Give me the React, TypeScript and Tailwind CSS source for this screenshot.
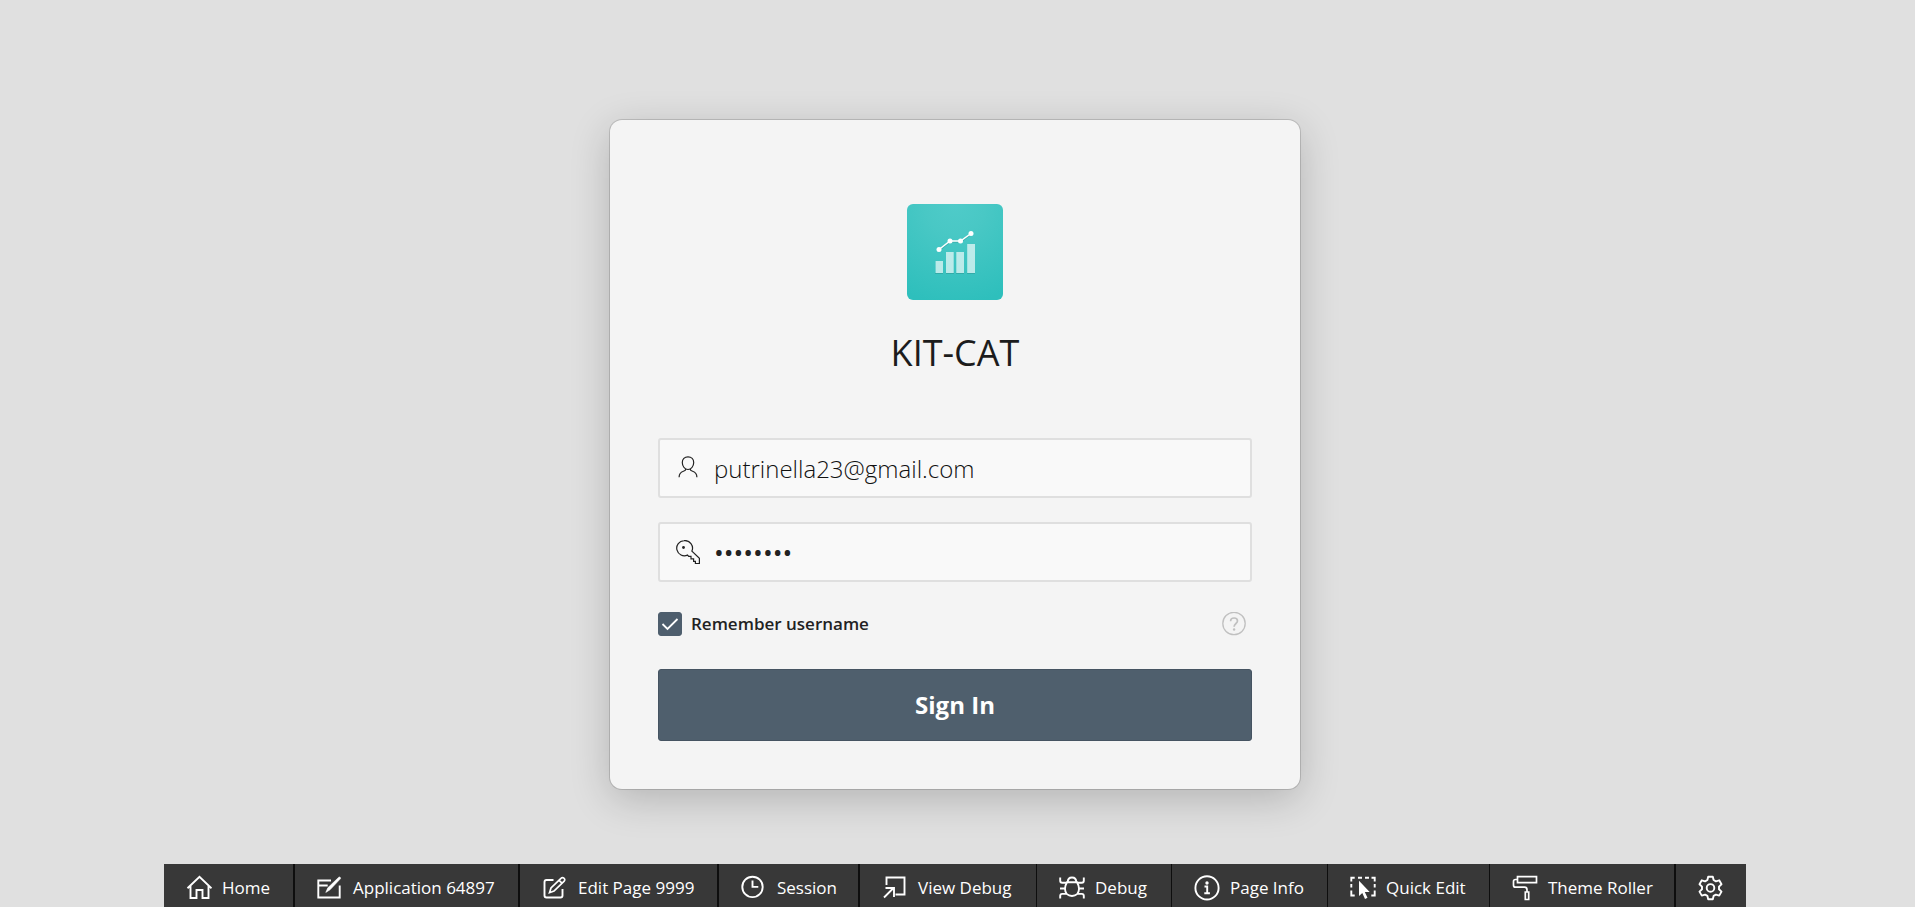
import type { ReactNode } from 'react';

type IconProps = { children: ReactNode };

function ToolIcon({ children }: IconProps) {
  return (
    <svg
      viewBox="0 0 26 26"
      className="h-[26px] w-[26px] shrink-0"
      fill="none"
      stroke="currentColor"
      strokeWidth="1.9"
      aria-hidden="true"
    >
      {children}
    </svg>
  );
}

const items = [
  {
    label: 'Home',
    width: 'min-w-[131px] border-r-2',
    icon: (
      <path d="M1.500 13.300 13.500 1.800l12 11.500M4.500 10.800V23h6v-8h6v8h6V10.800" />
    ),
  },
  {
    label: 'Application 64897',
    width: 'min-w-[225px] border-r-2',
    icon: (
      <>
        <path d="M14 5.500H1.300v17h21.400V10.500M1.300 10.500h9.400" />
        <path d="M21.800 2.200c.9-.7 2.300.5 1.600 1.600L13 14.800l-4.200 2.600 2-4.600Z" fill="currentColor" strokeWidth="0.600" />
      </>
    ),
  },
  {
    label: 'Edit Page 9999',
    width: 'min-w-[199px] border-r-2',
    icon: (
      <>
        <path d="M11.500 5H4.500a2 2 0 0 0-2 2v13.500a2 2 0 0 0 2 2h14a2 2 0 0 0 2-2V14" />
        <path d="m7.500 17.700 1.500-4.800L19.200 3.100a1.800 1.800 0 0 1 2.600 0l.4.400a1.800 1.800 0 0 1 0 2.600L12 16.100ZM17.100 5.300l2.900 2.900" strokeWidth="1.700" />
      </>
    ),
  },
  {
    label: 'Session',
    width: 'min-w-[141px] border-r-2',
    icon: (
      <>
        <circle cx="11.500" cy="11.900" r="10.200" />
        <path d="M11.500 5.400v6.500h5.800" />
      </>
    ),
  },
  {
    label: 'View Debug',
    width: 'min-w-[177px] border-r',
    icon: (
      <>
        <path d="M4.500 10V2.500h18v17H13.500" />
        <path d="M2 22.500 11.500 13M3.500 13h8.500v9" />
      </>
    ),
  },
  {
    label: 'Debug',
    width: 'min-w-[135px] border-r',
    icon: (
      <>
        <path d="M8 7.300h10c1.200 2 2 4.100 2 6.500 0 4.700-3 7.200-7 7.200s-7-2.500-7-7.200c0-2.400.8-4.500 2-6.500Z" />
        <path d="M8.700 7.300c0-2.800 1.700-4.800 4.300-4.800s4.300 2 4.300 4.800M1.200 2.500v3.300c0 1.400.8 2 2 2H8M24.800 2.500v3.300c0 1.400-.8 2-2 2H18M1 13.500h5M20 13.500h5M1.200 23.500v-2.600c0-1.400.8-2 2-2h4.200M24.800 23.500v-2.600c0-1.400-.8-2-2-2h-4.200" />
      </>
    ),
  },
  {
    label: 'Page Info',
    width: 'min-w-[156px] border-r',
    icon: (
      <>
        <circle cx="13" cy="12.900" r="11.600" />
        <circle cx="13" cy="8" r="1.700" fill="currentColor" stroke="none" />
        <path d="M10.500 11.500h2.700v6.800M10.300 18.300h5.600" />
      </>
    ),
  },
  {
    label: 'Quick Edit',
    width: 'min-w-[162px] border-r',
    icon: (
      <>
        <path d="M1.300 6.500V2.800h3.400M8 2.800h4M15 2.800h4M21.500 2.800h3.200v3.700M1.300 9v3.500M1.300 15.500v5h3.400M24.700 9v3.500M24.700 15.500v5h-3.400" />
        <path d="M9 5.700v15.200l3.300-3 2.700 6 2.500-1.200-2.700-5.600 4.900-.1Z" fill="currentColor" stroke="none" />
      </>
    ),
  },
  {
    label: 'Theme Roller',
    width: 'min-w-[186px] border-r-2',
    icon: (
      <path
        d="M5.500 1.700h19v6h-19zM5.500 4.500H3.500a2 2 0 0 0-2 2v3.700a2 2 0 0 0 2 2h9a2.500 2.500 0 0 1 2.500 2.500V17M13.300 17h3.400v7.500h-3.400z"
        strokeWidth="1.700"
      />
    ),
  },
];

export default function App() {
  return (
    <div className="flex min-h-screen flex-col items-center bg-[#e0e0e0] pr-[5px] font-['Open_Sans','Noto_Sans',sans-serif] text-[#222]">
      <main className="flex w-full flex-1 flex-col items-center justify-center px-4 pt-[45px]">
        <form
          className="flex w-full max-w-[722px] flex-col px-4"
          onSubmit={(e) => e.preventDefault()}
        >
          <div className="flex flex-col rounded-[12px] bg-[#f4f4f4] px-12 pt-[84px] pb-12 shadow-[0_0_0_1px_rgba(0,0,0,0.14),0_10px_40px_rgba(0,0,0,0.2)]">
            <svg viewBox="0 0 96 96" className="h-24 w-24 self-center" aria-hidden="true">
              <defs>
                <radialGradient id="tile" cx="50%" cy="0%" r="105%">
                  <stop offset="0" stopColor="#4fcbc9" />
                  <stop offset="0.300" stopColor="#49c8c5" />
                  <stop offset="1" stopColor="#2ebfbc" />
                </radialGradient>
              </defs>
              <rect width="96" height="96" rx="6" fill="url(#tile)" />
              <path d="M28 69.500h8M39 69.500h8M49 69.500h8M60 69.500h8" stroke="#000" strokeOpacity=".12" />
              <path d="M28.600 57H36v12h-7.400zM39 48h7.700v21H39zM49.300 48H57v21h-7.700zM60.200 40H68v29h-7.800z" fill="#fff" fillOpacity=".65" />
              <path d="M32 46.500 43 38h10.500L64 30.500" fill="none" stroke="#000" strokeOpacity=".12" strokeWidth="1.500" />
              <path d="M32 45.500 43 37h10.500L64 29.500" fill="none" stroke="#fff" strokeWidth="1.500" />
              <g fill="#fff">
                <circle cx="32" cy="45.500" r="2.500" />
                <circle cx="43" cy="37" r="2.500" />
                <circle cx="53.500" cy="37" r="2.500" />
                <circle cx="64" cy="29.500" r="2.500" />
              </g>
            </svg>

            <h1 className="mt-7 text-center text-[36px] leading-[50px] font-medium text-[#1c1c1c]">KIT-CAT</h1>

            <div className="mt-[60px] flex h-[60px] items-center rounded-[3px] border-2 border-[#dfdfdf] bg-[#f9f9f9]">
              <svg viewBox="0 0 24 24" className="ml-4 h-6 w-6 shrink-0" fill="none" stroke="#222" strokeWidth="1.200" aria-hidden="true">
                <path d="M12 .8c3.500 0 5.700 2.400 5.700 5.700s-2.200 7-5.700 7-5.700-3.700-5.700-7S8.500.8 12 .8Z" />
                <path d="M9.800 13c0 1.400-.8 1.800-2.400 2.300-2.800 1-4.300 2.500-4.300 6M14.200 13c0 1.400.8 1.800 2.400 2.300 2.800 1 4.300 2.500 4.300 6" />
              </svg>
              <input
                type="text"
                aria-label="Username"
                defaultValue="putrinella23@gmail.com"
                className="h-full min-w-0 flex-1 bg-transparent pl-[14px] text-[24px] font-light text-[#111] outline-none"
              />
            </div>

            <div className="mt-6 flex h-[60px] items-center rounded-[3px] border-2 border-[#dfdfdf] bg-[#f9f9f9]">
              <svg viewBox="0 0 24 24" className="ml-4 h-6 w-6 shrink-0" fill="none" stroke="#222" strokeWidth="1.200" aria-hidden="true">
                <path d="M8 .6a7.600 7.600 0 1 0 3.500 14.500l1.200 1.300 2.300-.1v2.600h2.600v2.500h1.800v2.100h4v-5.200l-7.500-7.200A7.600 7.600 0 0 0 8 .6Z" />
                <circle cx="7.500" cy="7.500" r="1.400" fill="#222" stroke="none" />
              </svg>
              <input
                type="password"
                aria-label="Password"
                defaultValue="password"
                className="h-full min-w-0 flex-1 bg-transparent pl-[14px] text-[26px] outline-none"
              />
            </div>

            <div className="mt-[30px] flex h-6 items-center justify-between">
              <label className="flex items-center text-[17px] leading-6 font-semibold">
                <span className="relative mr-[9px] flex h-6 w-6">
                  <input
                    type="checkbox"
                    defaultChecked
                    className="peer h-6 w-6 appearance-none rounded-[3px] border border-[#4e5e6d] bg-[#f9f9f9] checked:bg-[#4e5e6d]"
                  />
                  <svg viewBox="0 0 24 24" className="pointer-events-none absolute inset-0 hidden h-6 w-6 peer-checked:block" fill="none" stroke="#fff" strokeWidth="1.800" aria-hidden="true">
                    <path d="m4.500 12 5 5L19.500 7" />
                  </svg>
                </span>
                Remember username
              </label>
              <button type="button" aria-label="Help" className="mr-[6px] h-6 w-6 text-[#c0c0c0]">
                <svg viewBox="0 0 24 24" className="h-6 w-6" fill="none" stroke="currentColor" strokeWidth="1.300">
                  <circle cx="12" cy="11.500" r="11.200" />
                  <path d="M8.600 9.300c0-2 1.400-3.300 3.500-3.300s3.400 1.200 3.400 3c0 2.500-3.400 2.600-3.400 5.800" strokeWidth="1.700" />
                  <circle cx="12.100" cy="17.500" r="1.200" fill="currentColor" stroke="none" />
                </svg>
              </button>
            </div>

            <button
              type="submit"
              className="mt-[33px] h-[72px] rounded-[3px] border border-[#455361] bg-[#4f5f6d] text-[24px] font-bold text-white"
            >
              Sign In
            </button>
          </div>
        </form>
      </main>

      <nav aria-label="Developer toolbar" className="flex h-[43px] bg-[#383838] text-[17px] text-white">
        {items.map(({ label, width, icon }) => (
          <a key={label} href="#" className={`flex items-center gap-[10px] border-[#0e0e0e] pt-1 pl-[22px] whitespace-nowrap ${width}`}>
            <ToolIcon>{icon}</ToolIcon>
            {label}
          </a>
        ))}
        <button type="button" aria-label="Options" className="flex w-[70px] items-center justify-center pt-1">
          <ToolIcon>
            <path d="M10.200 1.700h4.600l.8 3.300 2.300 1.300 3.300-1 2.300 4-2.500 2.300v2.700l2.500 2.300-2.300 4-3.300-1-2.300 1.300-.8 3.300h-4.600l-.8-3.300-2.300-1.300-3.300 1-2.300-4 2.500-2.300v-2.700L1.500 9.300l2.300-4 3.300 1L9.400 5Z" strokeLinejoin="round" />
            <circle cx="12.500" cy="12.900" r="3.800" />
          </ToolIcon>
        </button>
      </nav>
    </div>
  );
}
